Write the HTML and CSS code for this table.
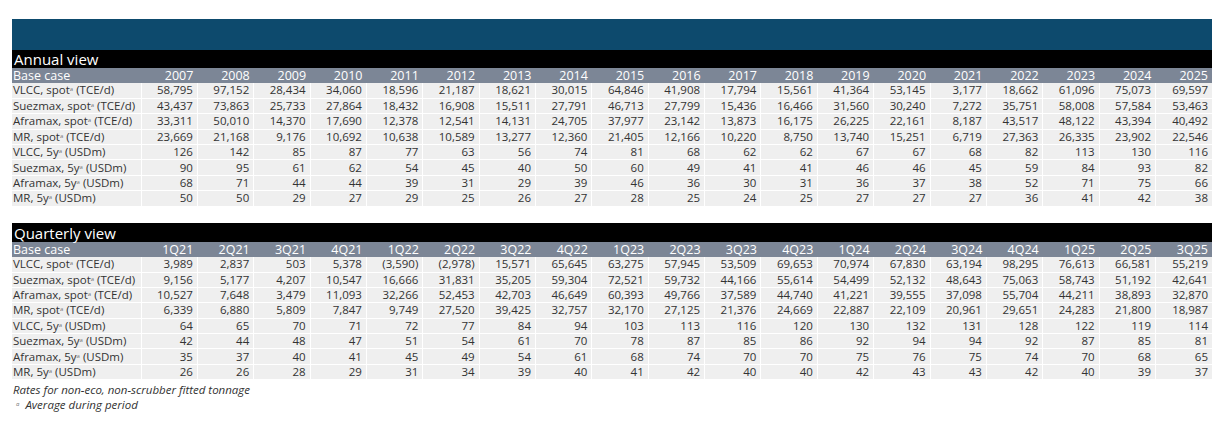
FILE: index.html
```html
<!DOCTYPE html>
<html>
<head>
<meta charset="utf-8">
<link rel="stylesheet" href="styles.css">
</head>
<body>
<div class="page">
  <div class="banner"></div>
  <table class="grid">
    <colgroup><col class="c-label"><col span="19" class="c-val"></colgroup>
    <tr class="title"><th colspan="20">Annual view</th></tr>
    <tr class="head"><th>Base case</th><th>2007</th><th>2008</th><th>2009</th><th>2010</th><th>2011</th><th>2012</th><th>2013</th><th>2014</th><th>2015</th><th>2016</th><th>2017</th><th>2018</th><th>2019</th><th>2020</th><th>2021</th><th>2022</th><th>2023</th><th>2024</th><th>2025</th></tr>
    <tr><td>VLCC, spot<span class="sup">a</span> (TCE/d)</td><td>58,795</td><td>97,152</td><td>28,434</td><td>34,060</td><td>18,596</td><td>21,187</td><td>18,621</td><td>30,015</td><td>64,846</td><td>41,908</td><td>17,794</td><td>15,561</td><td>41,364</td><td>53,145</td><td>3,177</td><td>18,662</td><td>61,096</td><td>75,073</td><td>69,597</td></tr>
    <tr><td>Suezmax, spot<span class="sup">a</span> (TCE/d)</td><td>43,437</td><td>73,863</td><td>25,733</td><td>27,864</td><td>18,432</td><td>16,908</td><td>15,511</td><td>27,791</td><td>46,713</td><td>27,799</td><td>15,436</td><td>16,466</td><td>31,560</td><td>30,240</td><td>7,272</td><td>35,751</td><td>58,008</td><td>57,584</td><td>53,463</td></tr>
    <tr><td>Aframax, spot<span class="sup">a</span> (TCE/d)</td><td>33,311</td><td>50,010</td><td>14,370</td><td>17,690</td><td>12,378</td><td>12,541</td><td>14,131</td><td>24,705</td><td>37,977</td><td>23,142</td><td>13,873</td><td>16,175</td><td>26,225</td><td>22,161</td><td>8,187</td><td>43,517</td><td>48,122</td><td>43,394</td><td>40,492</td></tr>
    <tr><td>MR, spot<span class="sup">a</span> (TCE/d)</td><td>23,669</td><td>21,168</td><td>9,176</td><td>10,692</td><td>10,638</td><td>10,589</td><td>13,277</td><td>12,360</td><td>21,405</td><td>12,166</td><td>10,220</td><td>8,750</td><td>13,740</td><td>15,251</td><td>6,719</td><td>27,363</td><td>26,335</td><td>23,902</td><td>22,546</td></tr>
    <tr><td>VLCC, 5y<span class="sup">a</span> (USDm)</td><td>126</td><td>142</td><td>85</td><td>87</td><td>77</td><td>63</td><td>56</td><td>74</td><td>81</td><td>68</td><td>62</td><td>62</td><td>67</td><td>67</td><td>68</td><td>82</td><td>113</td><td>130</td><td>116</td></tr>
    <tr><td>Suezmax, 5y<span class="sup">a</span> (USDm)</td><td>90</td><td>95</td><td>61</td><td>62</td><td>54</td><td>45</td><td>40</td><td>50</td><td>60</td><td>49</td><td>41</td><td>41</td><td>46</td><td>46</td><td>45</td><td>59</td><td>84</td><td>93</td><td>82</td></tr>
    <tr><td>Aframax, 5y<span class="sup">a</span> (USDm)</td><td>68</td><td>71</td><td>44</td><td>44</td><td>39</td><td>31</td><td>29</td><td>39</td><td>46</td><td>36</td><td>30</td><td>31</td><td>36</td><td>37</td><td>38</td><td>52</td><td>71</td><td>75</td><td>66</td></tr>
    <tr><td>MR, 5y<span class="sup">a</span> (USDm)</td><td>50</td><td>50</td><td>29</td><td>27</td><td>29</td><td>25</td><td>26</td><td>27</td><td>28</td><td>25</td><td>24</td><td>25</td><td>27</td><td>27</td><td>27</td><td>36</td><td>41</td><td>42</td><td>38</td></tr>
  </table>

  <table class="grid quarterly">
    <colgroup><col class="c-label"><col span="19" class="c-val"></colgroup>
    <tr class="title"><th colspan="20">Quarterly view</th></tr>
    <tr class="head"><th>Base case</th><th>1Q21</th><th>2Q21</th><th>3Q21</th><th>4Q21</th><th>1Q22</th><th>2Q22</th><th>3Q22</th><th>4Q22</th><th>1Q23</th><th>2Q23</th><th>3Q23</th><th>4Q23</th><th>1Q24</th><th>2Q24</th><th>3Q24</th><th>4Q24</th><th>1Q25</th><th>2Q25</th><th>3Q25</th></tr>
    <tr><td>VLCC, spot<span class="sup">a</span> (TCE/d)</td><td>3,989</td><td>2,837</td><td>503</td><td>5,378</td><td>(3,590)</td><td>(2,978)</td><td>15,571</td><td>65,645</td><td>63,275</td><td>57,945</td><td>53,509</td><td>69,653</td><td>70,974</td><td>67,830</td><td>63,194</td><td>98,295</td><td>76,613</td><td>66,581</td><td>55,219</td></tr>
    <tr><td>Suezmax, spot<span class="sup">a</span> (TCE/d)</td><td>9,156</td><td>5,177</td><td>4,207</td><td>10,547</td><td>16,666</td><td>31,831</td><td>35,205</td><td>59,304</td><td>72,521</td><td>59,732</td><td>44,166</td><td>55,614</td><td>54,499</td><td>52,132</td><td>48,643</td><td>75,063</td><td>58,743</td><td>51,192</td><td>42,641</td></tr>
    <tr><td>Aframax, spot<span class="sup">a</span> (TCE/d)</td><td>10,527</td><td>7,648</td><td>3,479</td><td>11,093</td><td>32,266</td><td>52,453</td><td>42,703</td><td>46,649</td><td>60,393</td><td>49,766</td><td>37,589</td><td>44,740</td><td>41,221</td><td>39,555</td><td>37,098</td><td>55,704</td><td>44,211</td><td>38,893</td><td>32,870</td></tr>
    <tr><td>MR, spot<span class="sup">a</span> (TCE/d)</td><td>6,339</td><td>6,880</td><td>5,809</td><td>7,847</td><td>9,749</td><td>27,520</td><td>39,425</td><td>32,757</td><td>32,170</td><td>27,125</td><td>21,376</td><td>24,669</td><td>22,887</td><td>22,109</td><td>20,961</td><td>29,651</td><td>24,283</td><td>21,800</td><td>18,987</td></tr>
    <tr><td>VLCC, 5y<span class="sup">a</span> (USDm)</td><td>64</td><td>65</td><td>70</td><td>71</td><td>72</td><td>77</td><td>84</td><td>94</td><td>103</td><td>113</td><td>116</td><td>120</td><td>130</td><td>132</td><td>131</td><td>128</td><td>122</td><td>119</td><td>114</td></tr>
    <tr><td>Suezmax, 5y<span class="sup">a</span> (USDm)</td><td>42</td><td>44</td><td>48</td><td>47</td><td>51</td><td>54</td><td>61</td><td>70</td><td>78</td><td>87</td><td>85</td><td>86</td><td>92</td><td>94</td><td>94</td><td>92</td><td>87</td><td>85</td><td>81</td></tr>
    <tr><td>Aframax, 5y<span class="sup">a</span> (USDm)</td><td>35</td><td>37</td><td>40</td><td>41</td><td>45</td><td>49</td><td>54</td><td>61</td><td>68</td><td>74</td><td>70</td><td>70</td><td>75</td><td>76</td><td>75</td><td>74</td><td>70</td><td>68</td><td>65</td></tr>
    <tr><td>MR, 5y<span class="sup">a</span> (USDm)</td><td>26</td><td>26</td><td>28</td><td>29</td><td>31</td><td>34</td><td>39</td><td>40</td><td>41</td><td>42</td><td>40</td><td>40</td><td>42</td><td>43</td><td>43</td><td>42</td><td>40</td><td>39</td><td>37</td></tr>
  </table>

  <div class="notes">
    <p>Rates for non-eco, non-scrubber fitted tonnage</p>
    <p class="indent"><span class="sup">a</span>&nbsp; Average during period</p>
  </div>
</div>
</body>
</html>
```

FILE: styles.css
```css
html, body {
  margin: 0;
  padding: 0;
  background: #ffffff;
}

.page {
  padding: 19px 0 0 12px;
  width: 1200px;
  font-family: "Open Sans", "Liberation Sans", sans-serif;
  color: #333333;
}

.banner {
  height: 31px;
  background: #0d4a6d;
}

.grid {
  width: 1200px;
  border-collapse: collapse;
  table-layout: fixed;
  font-size: 11.5px;
  line-height: 14px;
}

.c-label { width: 129px; }

.grid th, .grid td {
  padding: 0 4px 0 1px;
  white-space: nowrap;
}

.title th {
  background: #000000;
  color: #ffffff;
  font-weight: 400;
  font-size: 15px;
  text-align: left;
  height: 18px;
  line-height: 17px;
  padding-left: 2px;
  vertical-align: bottom;
}

.head th {
  background: #7c8696;
  color: #ffffff;
  font-weight: 400;
  font-size: 12.5px;
  height: 15px;
  line-height: 15px;
  text-align: right;
}

.head th:first-child {
  text-align: left;
}

.grid td {
  background: #efefef;
  height: 15.4px;
  line-height: 14px;
  text-align: right;
  border-bottom: 1px solid #ffffff;
  border-left: 1px solid #ffffff;
  box-sizing: border-box;
}

.grid td:first-child {
  text-align: left;
  border-left: none;
}

.sup {
  font-size: 6px;
  line-height: 0;
  vertical-align: 3px;
  color: #777777;
}

.quarterly {
  margin-top: 16px;
}

.quarterly .title th {
  height: 19px;
  line-height: 18px;
}

.notes {
  padding: 2px 0 0 1px;
}

.notes p {
  margin: 0;
  font-style: italic;
  font-size: 11.5px;
  line-height: 15px;
  color: #333333;
}

.notes .indent {
  padding-left: 3px;
}
```
